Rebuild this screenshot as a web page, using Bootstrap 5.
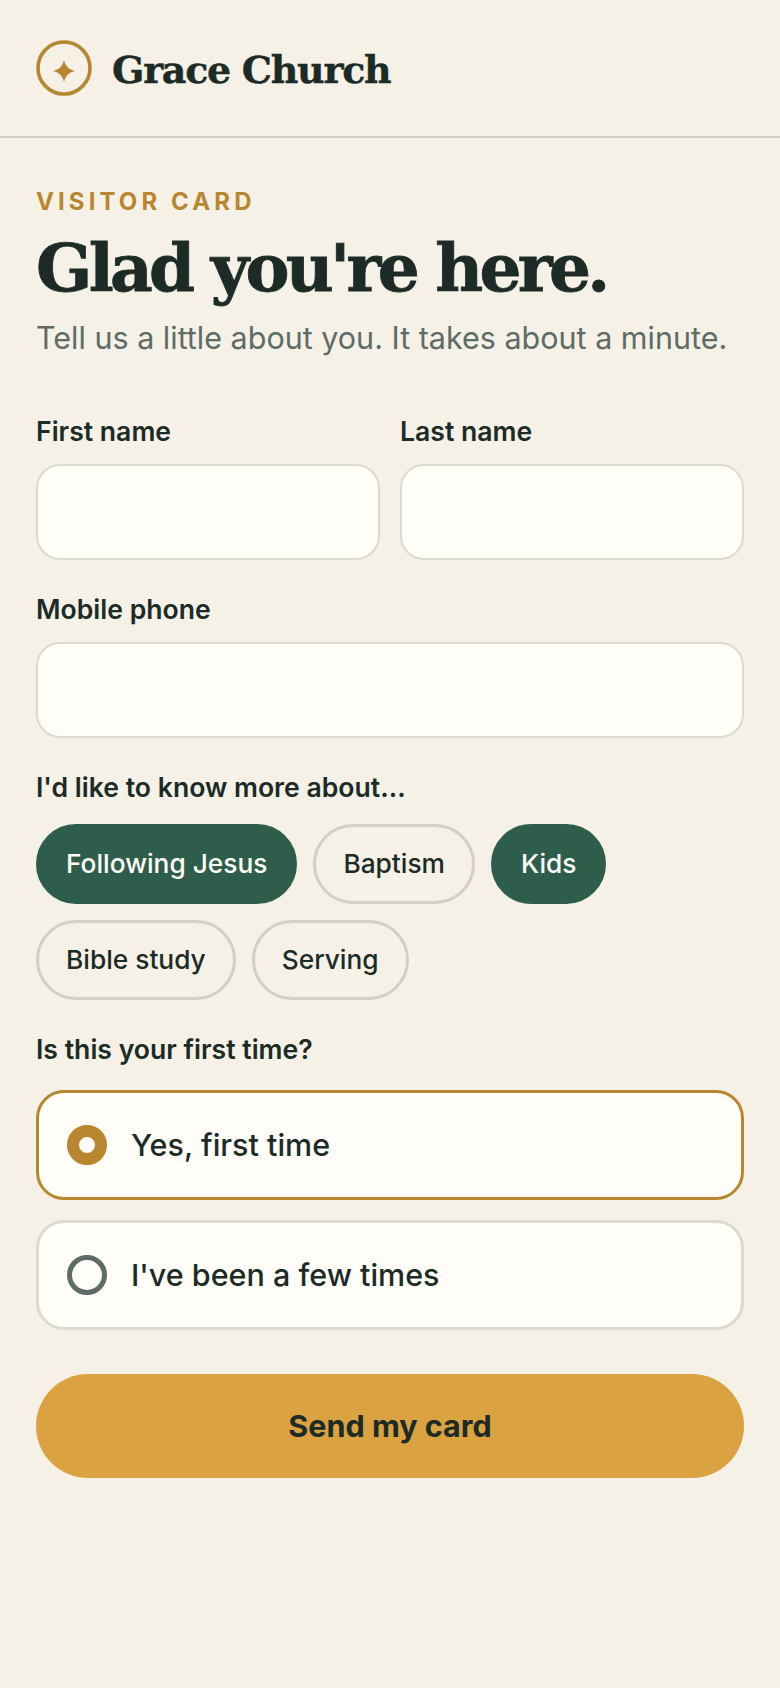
<!DOCTYPE html>
<html lang="en">
<head>
  <meta charset="UTF-8">
  <title>Grace Church</title>
  <link href="https://cdn.jsdelivr.net/npm/bootstrap@5.3.3/dist/css/bootstrap.min.css" rel="stylesheet">
  <style>
    body {
      background: #f5f1e6;
      color: #1c2b26;
      font-family: "Inter", "Noto Sans", sans-serif;
    }
    .site-head {
      height: 138px;
      padding: 0 36px;
      border-bottom: 2px solid #d4cfc4;
    }
    .brand-name {
      font-family: "DejaVu Serif", serif;
      font-weight: 700;
      font-size: 38px;
      letter-spacing: -1.3px;
      line-height: 46px;
      padding-top: 4px;
      -webkit-text-stroke: .4px #1c2b26;
    }
    .page-body { padding: 49px 36px 0; }
    .eyebrow {
      color: #b8862f;
      font-size: 24px;
      font-weight: 700;
      letter-spacing: 4.1px;
      line-height: 30px;
    }
    .headline {
      font-family: "DejaVu Serif", serif;
      font-weight: 700;
      font-size: 66px;
      letter-spacing: -3.7px;
      line-height: 80px;
      margin: 11px 0 0;
      -webkit-text-stroke: .8px #1c2b26;
    }
    .intro {
      color: #5f6b66;
      font-size: 30.5px;
      line-height: 42px;
      margin: 9px 0 0;
    }
    .name-row {
      display: grid;
      grid-template-columns: 1fr 1fr;
      gap: 20px;
      margin-top: 55px;
    }
    .field-group { margin-top: 32px; }
    .field-label {
      display: block;
      font-size: 26.6px;
      font-weight: 600;
      line-height: 34px;
      margin-bottom: 16px;
    }
    .label-roomy { margin-bottom: 20px; }
    .label-wide { margin-bottom: 24px; }
    .field-input {
      height: 96px;
      background: #fffdf8;
      border: 2px solid #dcd9d1;
      border-radius: 24px;
    }
    .chip {
      height: 80px;
      padding: 0 27px;
      border: 3px solid #d4cfc4;
      border-radius: 40px;
      background: transparent;
      color: #1c2b26;
      font-size: 26.3px;
      font-weight: 500;
    }
    .chip-on {
      background: #2f5d4c;
      border-color: #2f5d4c;
      color: #fffdf8;
    }
    .choice-list { gap: 20px; }
    .choice {
      height: 110px;
      padding: 0 28px;
      background: #fffdf8;
      border: 3px solid #dcd9d1;
      border-radius: 28px;
      font-size: 30.5px;
      font-weight: 500;
    }
    .choice-on { border-color: #b8862f; }
    .dot {
      width: 40px;
      height: 40px;
      border-radius: 50%;
      border: 5px solid #5f6b66;
    }
    .choice-on .dot { border: 12px solid #b8862f; }
    .send-btn {
      height: 104px;
      margin-top: 44px;
      background: #daa240;
      color: #1c2b26;
      border: 0;
      border-radius: 52px;
      font-size: 30.5px;
      font-weight: 700;
    }
  </style>
</head>
<body>
  <header class="site-head d-flex align-items-center gap-3">
    <svg width="56" height="56" viewBox="0 0 56 56" class="flex-shrink-0 me-1" fill="none">
      <circle cx="28" cy="28" r="26" stroke="#b8862f" stroke-width="3.6"/>
      <path d="M28 20 C30 27 32.500 29 39 31 C32.500 33 30 35 28 42 C26 35 23.500 33 17 31 C23.500 29 26 27 28 20 Z" fill="#b8862f"/>
    </svg>
    <div class="brand-name">Grace Church</div>
  </header>
  <main class="page-body">
    <div class="eyebrow">VISITOR CARD</div>
    <h1 class="headline">Glad you're here.</h1>
    <p class="intro">Tell us a little about you. It takes about a minute.</p>

    <div class="name-row">
      <div>
        <label class="field-label">First name</label>
        <div class="field-input"></div>
      </div>
      <div>
        <label class="field-label">Last name</label>
        <div class="field-input"></div>
      </div>
    </div>

    <div class="field-group">
      <label class="field-label">Mobile phone</label>
      <div class="field-input"></div>
    </div>

    <div class="field-group">
      <label class="field-label label-roomy">I'd like to know more about...</label>
      <div class="d-flex flex-wrap gap-3">
        <button class="chip chip-on">Following Jesus</button>
        <button class="chip">Baptism</button>
        <button class="chip chip-on">Kids</button>
        <button class="chip">Bible study</button>
        <button class="chip">Serving</button>
      </div>
    </div>

    <div class="field-group">
      <label class="field-label label-wide">Is this your first time?</label>
      <div class="d-flex flex-column choice-list">
        <div class="choice choice-on d-flex align-items-center gap-4"><span class="dot"></span>Yes, first time</div>
        <div class="choice d-flex align-items-center gap-4"><span class="dot"></span>I've been a few times</div>
      </div>
    </div>

    <button class="send-btn w-100">Send my card</button>
  </main>
</body>
</html>
